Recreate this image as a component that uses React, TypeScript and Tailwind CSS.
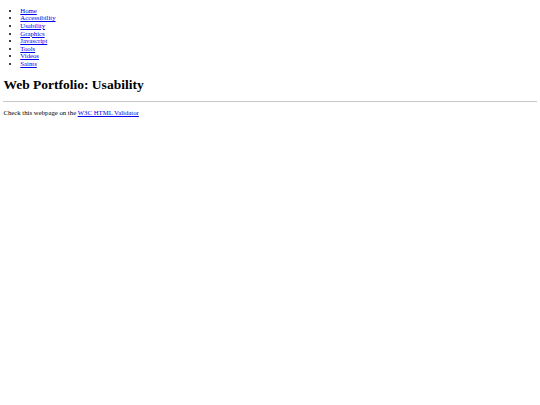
const links = ["Home", "Accessibility", "Usability", "Graphics", "Javascript", "Tools", "Videos", "Saints"];

export default function App() {
  return (
    <div className="min-h-[405px] bg-white px-[3.4px] py-[6.75px] font-['Liberation_Serif',serif] text-[6.75px] leading-[7.6px] text-black">
      <ul className="list-disc pl-[16.9px]">
        {links.map((l) => (
          <li key={l}>
            <a href="#" className="text-[#0000ee] underline">
              {l}
            </a>
          </li>
        ))}
      </ul>
      <h1 className="my-[9px] text-[13.5px] leading-[15.5px] font-bold">Web Portfolio: Usability</h1>
      <hr className="mt-[9px] mb-[3.4px] border-t border-[#c8c8c8]" />
      <p className="my-[6.75px]">
        Check this webpage on the{" "}
        <a href="#" className="text-[#0000ee] underline">
          W3C HTML Validator
        </a>
      </p>
    </div>
  );
}
